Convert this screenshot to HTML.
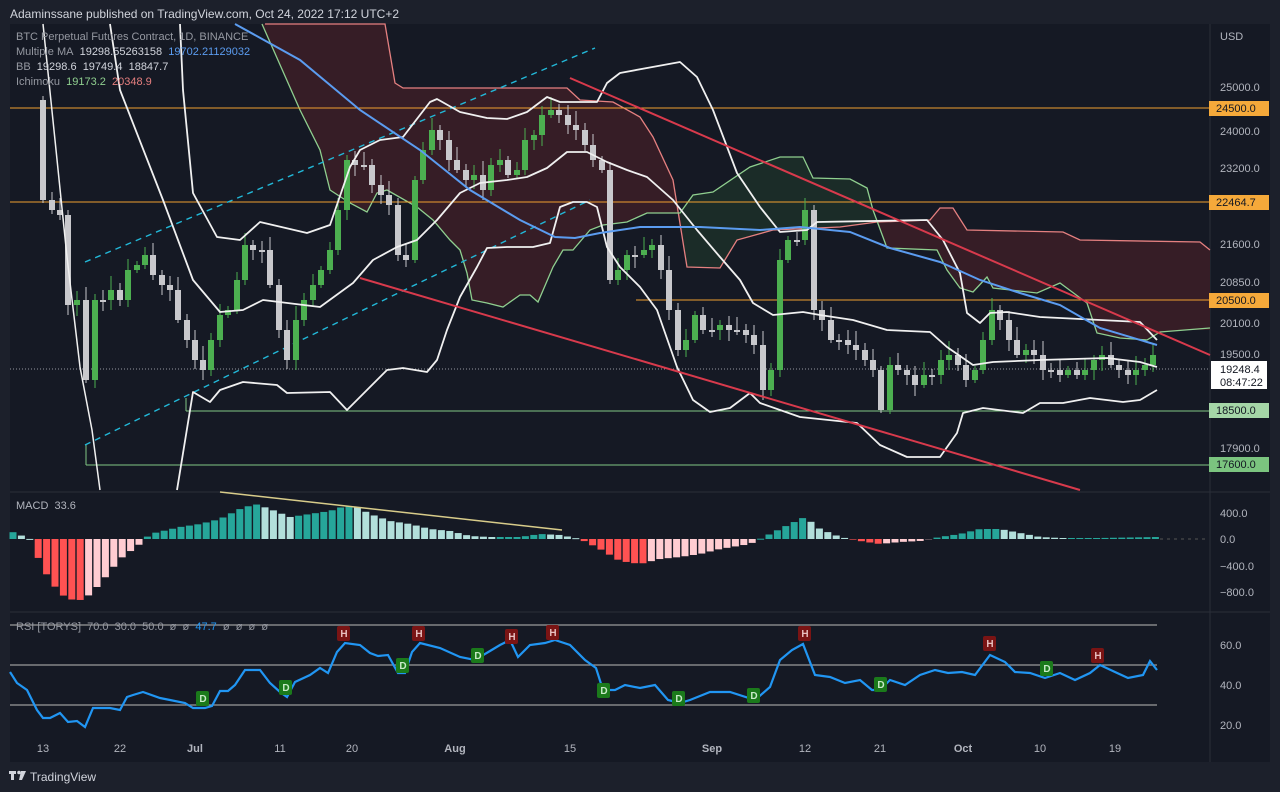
<!DOCTYPE html>
<html><head><meta charset="utf-8">
<style>
html,body{margin:0;padding:0;background:#1c202b;width:1280px;height:792px;overflow:hidden;font-family:"Liberation Sans",sans-serif}
.hdr{position:absolute;left:10px;top:7px;font-size:12px;color:#d1d4dc}
.lg{position:absolute;left:16px;font-size:11px;color:#9598a1;white-space:nowrap}
.lg b{font-weight:normal;color:#d1d4dc}
.ax{font-family:"Liberation Sans",sans-serif;font-size:11px;fill:#b2b5be}
</style></head><body>
<div class="hdr">Adaminssane published on TradingView.com, Oct 24, 2022 17:12 UTC+2</div>
<svg id="s" width="1280" height="792" style="position:absolute;left:0;top:0">
<rect x="10" y="24" width="1260" height="738" fill="#151924"/>
<line x1="10" y1="492" x2="1270" y2="492" stroke="#2a2e39"/>
<line x1="10" y1="612" x2="1270" y2="612" stroke="#2a2e39"/>
<line x1="1210" y1="24" x2="1210" y2="762" stroke="#2a2e39"/>
<!-- clouds -->
<polygon fill="#361d26" points="265,24 385,24 395,83 403,88 567,88 580,100 613,102 640,117 653,137 673,180 687,267 720,268 737,240 773,230 840,227 877,222 930,220 940,208 953,208 967,230 1063,232 1080,240 1200,242 1210,250 1210,330 1180,330 1160,332 1147,340 1120,338 1097,333 1087,303 1060,283 1037,293 993,288 987,277 973,292 960,288 947,270 937,250 887,248 873,210 867,188 850,179 813,178 803,157 780,157 750,167 713,192 693,195 680,213 647,213 627,222 603,225 590,230 573,250 563,250 553,267 538,302 530,295 520,295 503,307 487,303 472,300 467,273 460,250 450,240 433,220 417,207 387,190 377,193 367,212 350,203 330,190 320,150 300,110 262,24"/>
<polygon fill="#1b2c28" points="693,195 713,192 750,167 780,157 803,157 813,178 850,179 867,188 873,210 877,222 840,227 773,230 737,240 720,268 687,267 680,213"/>
<polyline fill="none" stroke="#e58080" stroke-width="1.3" points="265,24 385,24 395,83 403,88 567,88 580,100 613,102 640,117 653,137 673,180 687,267 720,268 737,240 773,230 840,227 877,222 930,220 940,208 953,208 967,230 1063,232 1080,240 1200,242 1210,250"/>
<polyline fill="none" stroke="#8fcf8f" stroke-width="1.3" points="262,24 300,110 320,150 330,190 350,203 367,212 377,193 387,190 417,207 433,220 450,240 460,250 467,273 472,300 487,303 503,307 520,295 530,295 538,302 553,267 563,250 573,250 590,230 603,225 627,222 647,213 680,213 693,195 713,192 750,167 780,157 803,157 813,178 850,179 867,188 873,210 887,248 937,250 947,270 960,288 973,292 987,277 993,288 1037,293 1060,283 1087,303 1097,333 1120,338 1147,340 1160,332 1210,328"/>
<!-- horizontals -->
<line x1="10" y1="108" x2="1210" y2="108" stroke="#f0a030"/>
<line x1="10" y1="202" x2="1210" y2="202" stroke="#f0a030"/>
<line x1="636" y1="300" x2="1210" y2="300" stroke="#f0a030"/>
<line x1="186" y1="411" x2="1210" y2="411" stroke="#81c784"/>
<line x1="86" y1="465" x2="1210" y2="465" stroke="#81c784"/>
<line x1="186" y1="398" x2="186" y2="411" stroke="#81c784"/>
<line x1="86" y1="445" x2="86" y2="465" stroke="#81c784"/>
<line x1="10" y1="369" x2="1210" y2="369" stroke="#9598a1" stroke-dasharray="1,2"/>
<!-- channel -->
<line x1="85" y1="262" x2="595" y2="48" stroke="#22b8d8" stroke-width="1.4" stroke-dasharray="6,5"/>
<line x1="85" y1="445" x2="590" y2="200" stroke="#22b8d8" stroke-width="1.4" stroke-dasharray="6,5"/>
<g id="candles"></g>
<!-- BB -->
<g fill="none" stroke="#f0f0f0" stroke-width="1.8" stroke-linejoin="round">
<polyline points="180,24 183,90 193,193 217,237 240,240 260,222 307,233 330,225 350,167 360,150 380,140 403,137 430,102 437,99 460,112 487,118 507,119 527,112 547,97 560,102 597,102 607,83 620,73 647,68 680,62 697,77 713,110 737,173 760,207 780,232 807,230 817,222 927,220 943,240 960,273 967,313 980,323 990,313 1007,312 1040,317 1140,322 1157,340"/>
<polyline points="110,24 120,90 163,200 193,280 220,312 243,310 263,300 320,307 353,283 373,260 397,247 417,240 437,220 460,193 480,183 507,180 527,177 547,168 567,152 587,152 607,162 627,170 647,177 673,200 697,230 720,257 740,280 753,303 773,315 803,312 820,315 853,320 887,330 930,332 947,347 973,365 993,362 1040,360 1107,358 1140,362 1157,367"/>
<polyline points="177,490 193,392 210,402 220,390 243,382 277,385 287,393 330,392 347,410 370,387 387,370 403,368 427,372 437,360 447,330 460,297 477,267 487,248 507,247 533,247 550,243 560,207 573,202 587,202 597,207 607,247 620,267 640,287 657,310 677,367 693,400 710,412 730,408 750,393 760,403 800,417 857,423 880,445 907,457 940,457 957,433 963,413 983,408 1023,413 1040,403 1063,403 1090,398 1123,402 1140,400 1157,390"/>
<polyline points="43,24 55,140 67,257 80,367 92,430 100,490" stroke-width="1.5"/>
</g>
<!-- MA -->
<polyline fill="none" stroke="#5b9cf0" stroke-width="2" points="235,24 300,60 360,110 420,150 470,190 520,220 555,237 575,238 600,233 640,227 700,227 760,230 800,227 850,232 890,248 940,262 980,280 1020,293 1060,305 1100,328 1157,345"/>
<!-- red lines -->
<line x1="570" y1="78" x2="1210" y2="355" stroke="#d83a4c" stroke-width="2"/>
<line x1="360" y1="278" x2="1080" y2="490" stroke="#d83a4c" stroke-width="2"/>
<!-- right labels -->
<text class="ax" x="1220" y="40">USD</text>
<g class="ax">
<text x="1220" y="91">25000.0</text><text x="1220" y="135">24000.0</text><text x="1220" y="172">23200.0</text>
<text x="1220" y="248">21600.0</text><text x="1220" y="286">20850.0</text><text x="1220" y="327">20100.0</text>
<text x="1220" y="358">19500.0</text><text x="1220" y="452">17900.0</text>
<text x="1220" y="517">400.0</text><text x="1220" y="543">0.0</text><text x="1220" y="570">−400.0</text><text x="1220" y="596">−800.0</text>
<text x="1220" y="649">60.0</text><text x="1220" y="689">40.0</text><text x="1220" y="729">20.0</text>
</g>
<rect x="1209" y="101" width="60" height="15" fill="#f5a93a"/><text x="1216" y="112" font-size="11" fill="#131722" font-family="Liberation Sans">24500.0</text>
<rect x="1209" y="195" width="60" height="15" fill="#f5a93a"/><text x="1216" y="206" font-size="11" fill="#131722" font-family="Liberation Sans">22464.7</text>
<rect x="1209" y="293" width="60" height="15" fill="#f5a93a"/><text x="1216" y="304" font-size="11" fill="#131722" font-family="Liberation Sans">20500.0</text>
<rect x="1209" y="403" width="60" height="15" fill="#a5d6a7"/><text x="1216" y="414" font-size="11" fill="#131722" font-family="Liberation Sans">18500.0</text>
<rect x="1209" y="457" width="60" height="15" fill="#7bc47f"/><text x="1216" y="468" font-size="11" fill="#131722" font-family="Liberation Sans">17600.0</text>
<rect x="1211" y="361" width="56" height="28" fill="#ffffff"/><text x="1220" y="373" font-size="11" fill="#131722" font-family="Liberation Sans">19248.4</text><text x="1220" y="386" font-size="11" fill="#131722" font-family="Liberation Sans">08:47:22</text>
<!-- MACD -->
<line x1="1160" y1="539" x2="1208" y2="539" stroke="#555" stroke-dasharray="3,4"/>
<g id="hist"></g>
<line x1="220" y1="492" x2="562" y2="530" stroke="#d8cc8a" stroke-width="1.5"/>
<text x="16" y="509" font-size="11" fill="#b2b5be" font-family="Liberation Sans">MACD&#160;&#160;33.6</text>
<!-- RSI -->
<g stroke="#9a9a9a" stroke-width="1.3"><line x1="10" y1="625" x2="1157" y2="625"/><line x1="10" y1="665" x2="1157" y2="665"/><line x1="10" y1="705" x2="1157" y2="705"/></g>
<polyline fill="none" stroke="#2196f3" stroke-width="2.2" points="10,672 17,683 27,690 37,710 43,718 50,718 60,713 68,722 77,721 85,727 93,708 110,708 120,710 127,697 133,695 143,692 160,698 170,700 185,703 193,708 205,708 212,706 220,691 228,691 235,685 245,670 260,670 270,683 280,692 287,697 295,682 310,675 320,668 328,673 337,652 345,643 360,645 370,653 378,656 388,655 398,673 405,673 412,652 420,643 440,648 460,657 475,660 490,651 500,645 510,640 518,657 530,645 545,643 555,640 570,645 585,660 596,668 603,690 615,690 625,685 640,688 655,685 668,700 680,703 690,700 710,692 730,692 755,700 770,687 780,660 792,650 803,644 815,675 830,677 845,683 860,680 872,690 880,690 890,680 905,685 920,675 935,670 948,673 962,672 975,675 990,655 1005,662 1015,672 1030,673 1045,678 1060,673 1075,680 1090,673 1100,665 1115,672 1128,678 1143,675 1150,661 1157,670"/>
<g font-family="Liberation Sans" font-size="10" font-weight="bold" text-anchor="middle">
<g fill="#7a1414"><rect x="337" y="626" width="13" height="15" rx="2"/><rect x="412" y="626" width="13" height="15" rx="2"/><rect x="505" y="629" width="13" height="15" rx="2"/><rect x="546" y="625" width="13" height="15" rx="2"/><rect x="798" y="626" width="13" height="15" rx="2"/><rect x="983" y="636" width="13" height="15" rx="2"/><rect x="1091" y="648" width="13" height="15" rx="2"/></g>
<g fill="#e8c0c0"><text x="344" y="637">H</text><text x="419" y="637">H</text><text x="512" y="640">H</text><text x="553" y="636">H</text><text x="805" y="637">H</text><text x="990" y="647">H</text><text x="1098" y="659">H</text></g>
<g fill="#1b7a1b"><rect x="196" y="691" width="13" height="15" rx="2"/><rect x="279" y="680" width="13" height="15" rx="2"/><rect x="396" y="658" width="13" height="15" rx="2"/><rect x="471" y="648" width="13" height="15" rx="2"/><rect x="597" y="683" width="13" height="15" rx="2"/><rect x="672" y="691" width="13" height="15" rx="2"/><rect x="747" y="688" width="13" height="15" rx="2"/><rect x="874" y="677" width="13" height="15" rx="2"/><rect x="1040" y="661" width="13" height="15" rx="2"/></g>
<g fill="#c8eac8"><text x="203" y="702">D</text><text x="286" y="691">D</text><text x="403" y="669">D</text><text x="478" y="659">D</text><text x="604" y="694">D</text><text x="679" y="702">D</text><text x="754" y="699">D</text><text x="881" y="688">D</text><text x="1047" y="672">D</text></g>
</g>
<g class="ax" text-anchor="middle">
<text x="43" y="752">13</text><text x="120" y="752">22</text><text x="195" y="752" font-weight="bold">Jul</text><text x="280" y="752">11</text><text x="352" y="752">20</text><text x="455" y="752" font-weight="bold">Aug</text><text x="570" y="752">15</text><text x="712" y="752" font-weight="bold">Sep</text><text x="805" y="752">12</text><text x="880" y="752">21</text><text x="963" y="752" font-weight="bold">Oct</text><text x="1040" y="752">10</text><text x="1115" y="752">19</text>
</g>
<g fill="#d1d4dc"><rect x="9" y="771" width="7" height="3"/><rect x="11" y="771" width="3" height="9"/><circle cx="19" cy="772.5" r="1.8"/><polygon points="21,771 26,771 22,780 19,780"/></g>
<text x="30" y="781" font-size="12" fill="#d1d4dc" font-family="Liberation Sans">TradingView</text>
</svg>
<div class="lg" style="top:31px">BTC Perpetual Futures Contract, 1D, BINANCE</div>
<div class="lg" style="top:46px">Multiple MA&#160;&#160;<b>19298.55263158</b>&#160;&#160;<b style="color:#5b9cf0">19702.21129032</b></div>
<div class="lg" style="top:61px">BB&#160;&#160;<b>19298.6</b>&#160;&#160;<b>19749.4</b>&#160;&#160;<b>18847.7</b></div>
<div class="lg" style="top:76px">Ichimoku&#160;&#160;<b style="color:#8fcf8f">19173.2</b>&#160;&#160;<b style="color:#e57f7f">20348.9</b></div>
<div class="lg" style="top:621px">RSI [TORYS]&#160;&#160;70.0&#160;&#160;30.0&#160;&#160;50.0&#160;&#160;ø&#160;&#160;ø&#160;&#160;<span style="color:#2196f3">47.7</span>&#160;&#160;ø&#160;&#160;ø&#160;&#160;ø&#160;&#160;ø</div>
<script>
(function(){
var NS="http://www.w3.org/2000/svg";
function interp(pts,x){for(var i=0;i<pts.length-1;i++){if(x>=pts[i][0]&&x<=pts[i+1][0]){var t=(x-pts[i][0])/(pts[i+1][0]-pts[i][0]);return pts[i][1]+t*(pts[i+1][1]-pts[i][1]);}}return pts[x<pts[0][0]?0:pts.length-1][1];}
var cp=[[43,200],[52,210],[60,215],[68,305],[77,300],[86,380],[95,300],[103,300],[111,290],[120,300],[128,270],[137,265],[145,255],[153,275],[162,285],[170,290],[178,320],[187,340],[195,360],[203,370],[211,340],[220,315],[228,310],[237,280],[245,245],[253,250],[262,250],[270,285],[279,330],[287,360],[296,320],[304,300],[313,285],[321,270],[330,250],[338,210],[347,160],[355,165],[364,165],[372,185],[381,195],[389,205],[398,255],[406,260],[415,180],[423,150],[432,130],[440,140],[449,160],[457,170],[466,180],[474,175],[483,190],[491,165],[500,160],[508,175],[517,170],[525,140],[534,135],[542,115],[551,110],[559,115],[568,125],[576,130],[585,145],[593,160],[602,170],[610,280],[618,270],[627,255],[635,255],[644,250],[652,245],[661,270],[669,310],[678,350],[686,340],[695,315],[703,330],[712,330],[720,325],[729,330],[737,330],[746,335],[754,345],[763,390],[771,370],[780,260],[788,240],[797,240],[805,210],[814,310],[822,320],[831,340],[839,340],[848,345],[856,350],[865,360],[873,370],[881,410],[890,365],[898,370],[907,375],[915,385],[924,375],[932,375],[941,360],[949,355],[958,365],[966,380],[975,370],[983,340],[992,310],[1000,320],[1009,340],[1017,355],[1026,350],[1034,355],[1043,370],[1051,370],[1060,375],[1068,370],[1077,375],[1085,370],[1094,360],[1102,355],[1111,365],[1119,370],[1128,375],[1136,370],[1145,365],[1153,355]];
var g=document.getElementById("candles");
var prev=100;
for(var i=0;i<cp.length;i++){var x=cp[i][0],c=cp[i][1],o=(i==0?100:prev);
var up=c<o;var col=up?"#4caf50":"#c8c8cc";var top=Math.min(o,c),bot=Math.max(o,c);if(bot-top<2)bot=top+2;
var seed=(i*37)%11;var w=document.createElementNS(NS,"line");w.setAttribute("x1",x);w.setAttribute("x2",x);w.setAttribute("y1",top-4-seed);w.setAttribute("y2",bot+3+(seed*7)%9);w.setAttribute("stroke",col);g.appendChild(w);
var r=document.createElementNS(NS,"rect");r.setAttribute("x",x-3);r.setAttribute("y",top);r.setAttribute("width",6);r.setAttribute("height",bot-top);r.setAttribute("fill",col);g.appendChild(r);prev=c;}
var hp=[[10,8],[30,0],[43,-30],[60,-55],[75,-62],[85,-60],[100,-45],[120,-20],[140,-5],[150,5],[180,12],[200,15],[220,20],[240,30],[255,35],[270,30],[290,22],[310,25],[330,28],[345,33],[355,33],[370,25],[390,18],[410,15],[430,10],[450,8],[470,3],[490,2],[520,2],[540,5],[560,4],[580,0],[600,-10],[620,-22],[640,-25],[660,-20],[680,-18],[700,-15],[720,-10],[750,-5],[770,5],[790,15],[805,22],[820,10],[840,2],[860,-2],[880,-5],[900,-3],[920,-2],[940,2],[960,5],[980,10],[1000,10],[1020,6],[1040,2],[1060,1],[1100,1],[1157,2]];
var h=document.getElementById("hist");var pv=0;
for(var x=13;x<=1160;x+=8.4){var v=interp(hp,x);var col;
if(v>=0)col=(v>=pv)?"#26a69a":"#b2dfdb";else col=(v<=pv)?"#ff5252":"#ffcdd2";
var r=document.createElementNS(NS,"rect");r.setAttribute("x",x-3.5);r.setAttribute("width",7);
if(v>=0){r.setAttribute("y",539-v);r.setAttribute("height",Math.max(v,1));}else{r.setAttribute("y",539);r.setAttribute("height",-v);}
r.setAttribute("fill",col);h.appendChild(r);pv=v;}
})();
</script>
</body></html>
